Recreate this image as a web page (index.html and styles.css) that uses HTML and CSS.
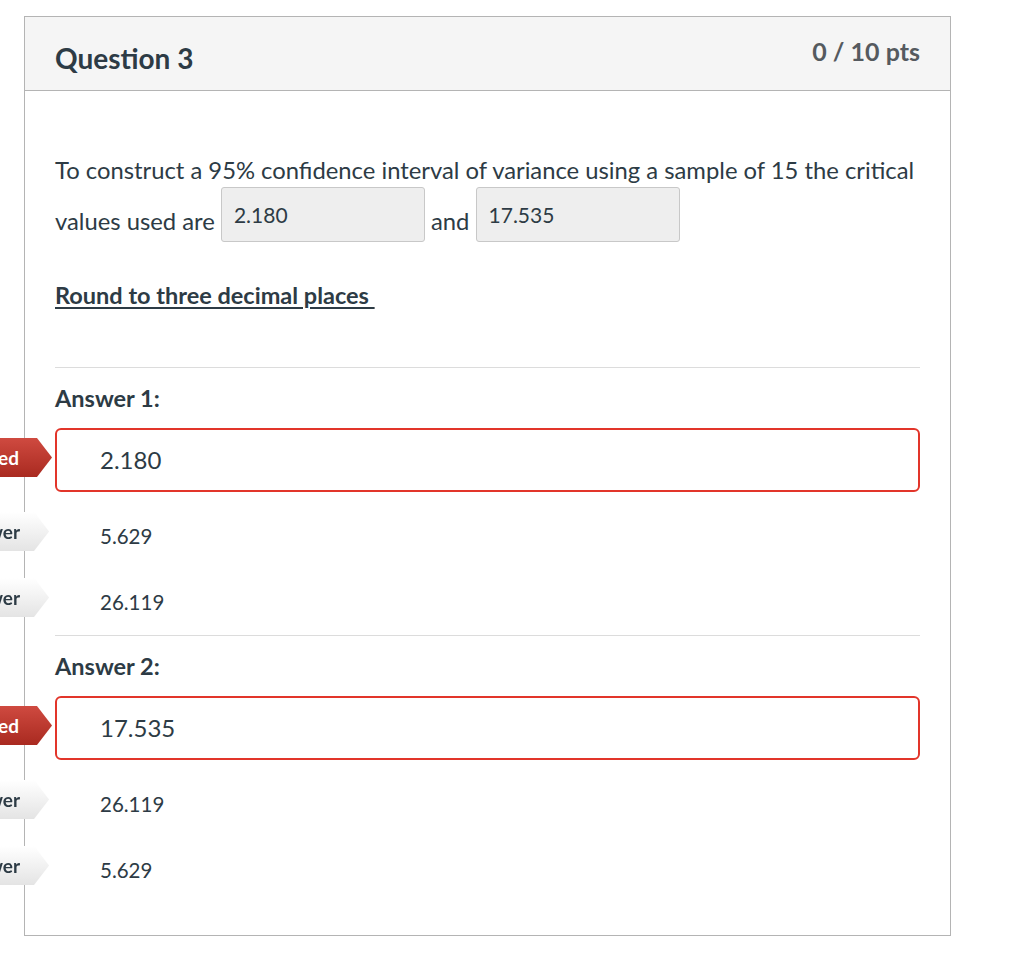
FILE: index.html
```html
<!DOCTYPE html>
<html>
<head>
<meta charset="utf-8">
<link rel="stylesheet" href="styles.css">
</head>
<body>
<div class="card">
  <div class="card-header">
    <h2 class="q-title">Question 3</h2>
    <div class="q-pts">0 / 10 pts</div>
  </div>
  <div class="card-body">
    <p class="q-text">To construct a 95% confidence interval of variance using a sample of 15 the critical values used are <span class="blank">2.180</span> and <span class="blank">17.535</span></p>
    <p class="q-note"><u>Round to three decimal places&nbsp;</u></p>

    <div class="answer-group">
      <div class="answer-label">Answer 1:</div>
      <div class="answer-row selected">
        <span class="badge badge-red">You Answered</span>
        <span class="answer-value">2.180</span>
      </div>
      <div class="answer-row">
        <span class="badge badge-grey">Correct Answer</span>
        <span class="answer-value">5.629</span>
      </div>
      <div class="answer-row">
        <span class="badge badge-grey">Correct Answer</span>
        <span class="answer-value">26.119</span>
      </div>
    </div>

    <div class="answer-group">
      <div class="answer-label">Answer 2:</div>
      <div class="answer-row selected">
        <span class="badge badge-red">You Answered</span>
        <span class="answer-value">17.535</span>
      </div>
      <div class="answer-row">
        <span class="badge badge-grey">Correct Answer</span>
        <span class="answer-value">26.119</span>
      </div>
      <div class="answer-row">
        <span class="badge badge-grey">Correct Answer</span>
        <span class="answer-value">5.629</span>
      </div>
    </div>
  </div>
</div>
</body>
</html>
```
FILE: styles.css
```css
html, body {
  margin: 0;
  padding: 0;
  background: #ffffff;
}
body {
  font-family: Lato, "Open Sans", sans-serif;
  color: #2d3b45;
  overflow: hidden;
}
.card {
  margin: 16px 0 0 24px;
  width: 925px;
  border: 1px solid #b4b4b4;
  background: #fff;
}
.card-header {
  display: flex;
  justify-content: space-between;
  align-items: flex-start;
  height: 73px;
  background: #f5f5f5;
  border-bottom: 1px solid #b4b4b4;
  padding: 0 30px 0 30px;
}
.q-title {
  margin: 0;
  padding-top: 26px;
  font-size: 28px;
  font-weight: 700;
  line-height: 30px;
  color: #2d3b45;
}
.q-pts {
  padding-top: 20px;
  font-size: 25px;
  font-weight: 700;
  line-height: 28px;
  color: #555a5f;
}
.card-body {
  padding: 0 30px 32px 30px;
}
.q-text {
  margin: 54px 0 0;
  font-size: 23.8px;
  line-height: 51px;
}
.blank {
  display: inline-block;
  vertical-align: 7px;
  box-sizing: border-box;
  width: 204px;
  height: 55px;
  margin: -10px 0 -10px;
  padding: 12px 12px 0;
  line-height: 30px;
  font-size: 21px;
  background: #eeeeee;
  border: 1px solid #c8c8c8;
  border-radius: 3px;
  color: #2d3b45;
}
.q-note {
  margin: 33px 0 0;
  font-size: 23.5px;
  font-weight: 700;
  line-height: 30px;
}
.q-note u {
  text-decoration-thickness: 2px;
  text-underline-offset: 3px;
}
.answer-group {
  margin-top: 57px;
  border-top: 1px solid #dcdcdc;
  padding-top: 15px;
}
.answer-group + .answer-group {
  margin-top: 0;
}
.answer-label {
  font-size: 23.5px;
  font-weight: 700;
  line-height: 30px;
  margin-bottom: 15px;
}
.answer-row {
  position: relative;
  display: flex;
  align-items: center;
  height: 66px;
  padding-left: 45px;
  font-size: 20.5px;
}
.selected + .answer-row {
  margin-top: 11px;
}
.answer-row.selected {
  box-sizing: border-box;
  height: 64px;
  border: 2px solid #e2352a;
  border-radius: 6px;
  padding-left: 43px;
  font-size: 24px;
}
.answer-value {
  line-height: 30px;
}
.badge {
  position: absolute;
  right: 100%;
  top: 50%;
  height: 39px;
  line-height: 39px;
  padding: 0 29px 0 30px;
  font-size: 19px;
  font-weight: 700;
  white-space: nowrap;
  clip-path: polygon(0 0, calc(100% - 15px) 0, 100% 50%, calc(100% - 15px) 100%, 0 100%);
}
.badge-red {
  margin-top: -22px;
  margin-right: 5px;
  padding-right: 33px;
  color: #fff;
  background: linear-gradient(#cf4a40, #a92a20);
}
.badge-grey {
  margin-top: -24px;
  margin-right: 6px;
  color: #2d3b45;
  background: linear-gradient(#ffffff, #e4e4e4);
  filter: drop-shadow(0 0 0.6px #9a9a9a);
}
```
